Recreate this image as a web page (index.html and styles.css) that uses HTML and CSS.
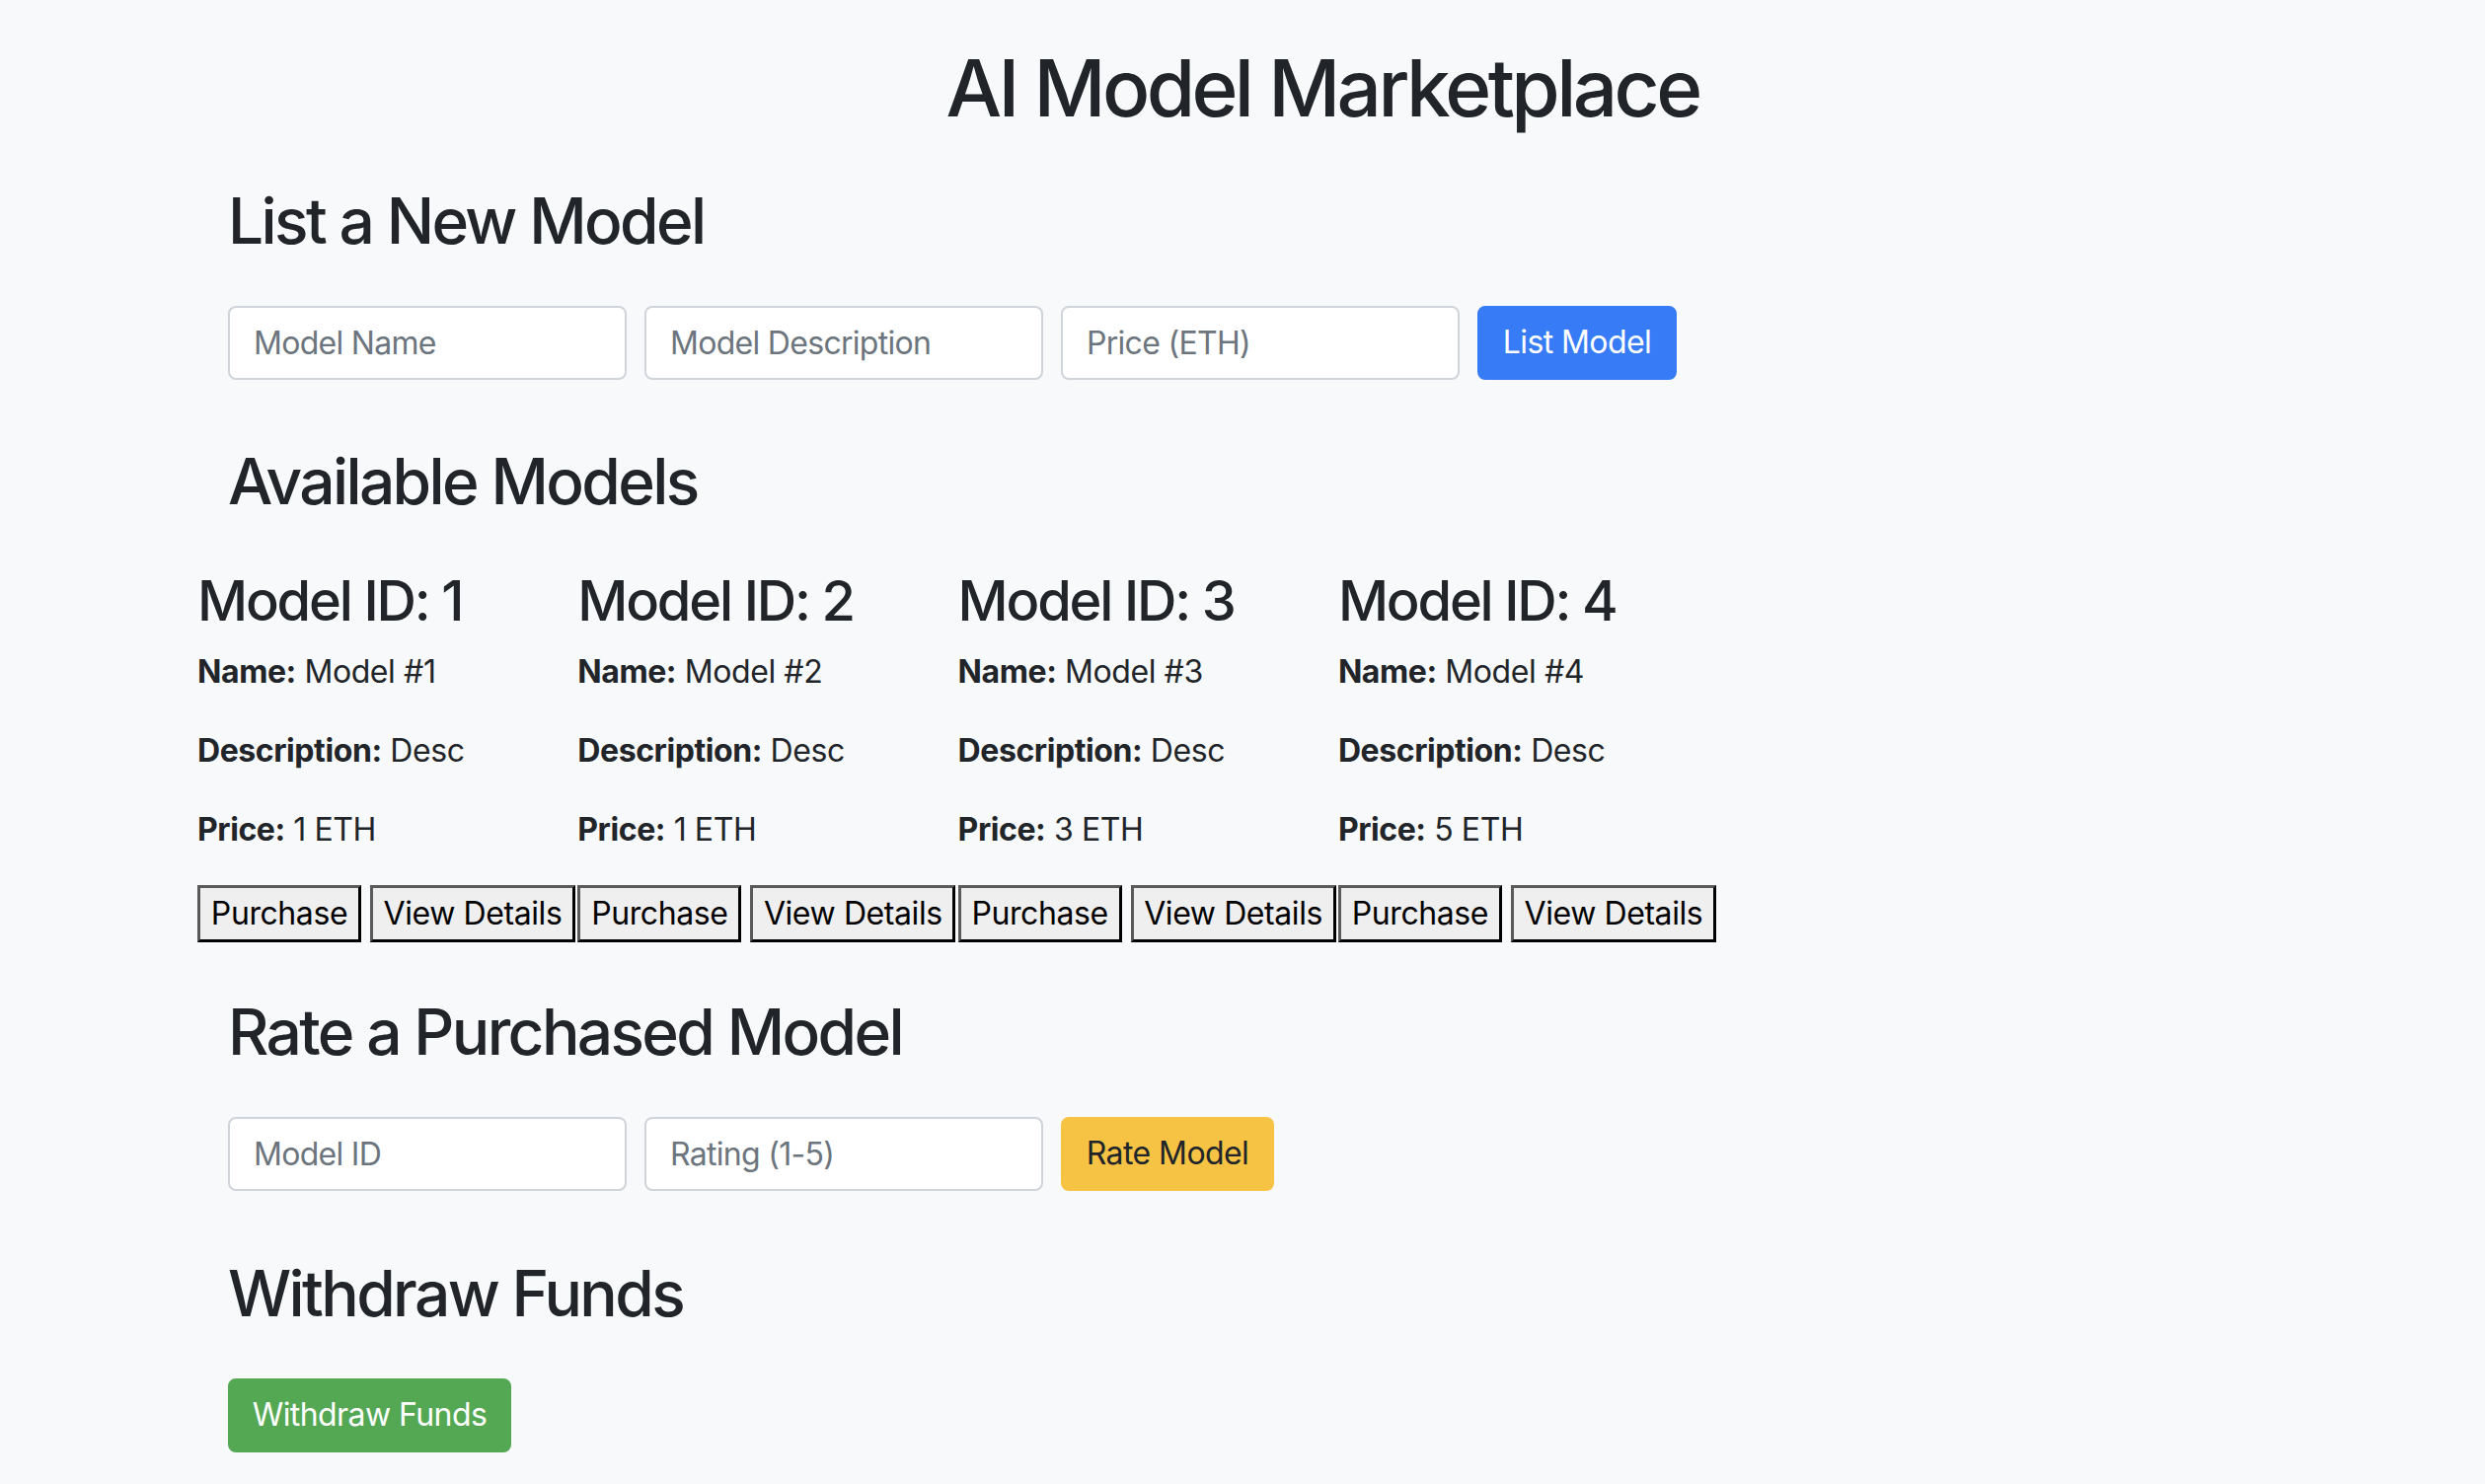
FILE: index.html
```html
<!DOCTYPE html>
<html lang="en">
<head>
<meta charset="utf-8">
<title>AI Model Marketplace</title>
<link rel="stylesheet" href="styles.css">
</head>
<body>
<main class="page">
  <h1 class="title">AI Model Marketplace</h1>

  <section class="section section-list">
    <h2 class="section-title">List a New Model</h2>
    <div class="form-row">
      <input class="field" type="text" placeholder="Model Name">
      <input class="field" type="text" placeholder="Model Description">
      <input class="field" type="text" placeholder="Price (ETH)">
      <button class="btn btn-primary btn-list" type="button">List Model</button>
    </div>
  </section>

  <section class="section section-models">
    <h2 class="section-title title-models">Available Models</h2>
  </section>

  <div class="model-grid">
    <div class="model-card">
      <h3 class="model-id">Model ID: 1</h3>
      <p class="model-line"><strong>Name:</strong> Model #1</p>
      <p class="model-line"><strong>Description:</strong> Desc</p>
      <p class="model-line"><strong>Price:</strong> 1 ETH</p>
      <div class="model-actions">
        <button class="plain-btn btn-buy" type="button">Purchase</button>
        <button class="plain-btn btn-view" type="button">View Details</button>
      </div>
    </div>
    <div class="model-card">
      <h3 class="model-id">Model ID: 2</h3>
      <p class="model-line"><strong>Name:</strong> Model #2</p>
      <p class="model-line"><strong>Description:</strong> Desc</p>
      <p class="model-line"><strong>Price:</strong> 1 ETH</p>
      <div class="model-actions">
        <button class="plain-btn btn-buy" type="button">Purchase</button>
        <button class="plain-btn btn-view" type="button">View Details</button>
      </div>
    </div>
    <div class="model-card">
      <h3 class="model-id">Model ID: 3</h3>
      <p class="model-line"><strong>Name:</strong> Model #3</p>
      <p class="model-line"><strong>Description:</strong> Desc</p>
      <p class="model-line"><strong>Price:</strong> 3 ETH</p>
      <div class="model-actions">
        <button class="plain-btn btn-buy" type="button">Purchase</button>
        <button class="plain-btn btn-view" type="button">View Details</button>
      </div>
    </div>
    <div class="model-card">
      <h3 class="model-id">Model ID: 4</h3>
      <p class="model-line"><strong>Name:</strong> Model #4</p>
      <p class="model-line"><strong>Description:</strong> Desc</p>
      <p class="model-line"><strong>Price:</strong> 5 ETH</p>
      <div class="model-actions">
        <button class="plain-btn btn-buy" type="button">Purchase</button>
        <button class="plain-btn btn-view" type="button">View Details</button>
      </div>
    </div>
  </div>

  <section class="section section-rate">
    <h2 class="section-title">Rate a Purchased Model</h2>
    <div class="form-row">
      <input class="field" type="text" placeholder="Model ID">
      <input class="field" type="text" placeholder="Rating (1-5)">
      <button class="btn btn-warning btn-rate" type="button">Rate Model</button>
    </div>
  </section>

  <section class="section section-withdraw">
    <h2 class="section-title">Withdraw Funds</h2>
    <div class="form-row">
      <button class="btn btn-success btn-withdraw" type="button">Withdraw Funds</button>
    </div>
  </section>
</main>
</body>
</html>
```

FILE: styles.css
```css
html, body {
  margin: 0;
  padding: 0;
}

body {
  background: #f8f9fa;
  color: #212529;
  font-family: Inter, "Liberation Sans", "Noto Sans", sans-serif;
  font-size: 32px;
  line-height: 1.5;
  letter-spacing: -0.013em;
}

.page {
  width: 2280px;
  margin-left: 200px;
  padding-top: 41px;
}

.title {
  margin: 0 0 49px;
  font-size: 80px;
  line-height: 96px;
  font-weight: 500;
  letter-spacing: -0.045em;
  text-align: center;
}

.section {
  padding-left: 31px;
}

.section-title {
  margin: 0 0 47px;
  font-size: 64px;
  line-height: 76.8px;
  font-weight: 500;
  letter-spacing: -0.041em;
}

.section-models {
  margin-top: 65px;
}

.title-models {
  margin-bottom: 49px;
}

.section-rate {
  margin-top: 52.7px;
}

.section-withdraw {
  margin-top: 66px;
}

.form-row {
  display: flex;
  align-items: stretch;
  gap: 18px;
}

.field {
  box-sizing: border-box;
  width: 404px;
  height: 75px;
  padding: 12px 24px;
  border: 2px solid #ced4da;
  border-radius: 8px;
  background: #fff;
  color: #495057;
  font-family: inherit;
  font-size: 32px;
  line-height: 48px;
  letter-spacing: -0.022em;
  outline: none;
}

.field::placeholder {
  color: #6c757d;
  opacity: 1;
}

.btn {
  box-sizing: border-box;
  height: 75px;
  padding: 0;
  border: 2px solid transparent;
  border-radius: 8px;
  font-family: inherit;
  font-size: 32px;
  line-height: 48px;
  font-weight: 400;
  letter-spacing: -0.018em;
  text-align: center;
  cursor: pointer;
}

.btn-primary {
  background: #377bf6;
  border-color: #377bf6;
  color: #fff;
}

.btn-warning {
  background: #f6c344;
  border-color: #f6c344;
  color: #212529;
}

.btn-success {
  background: #54a853;
  border-color: #54a853;
  color: #fff;
}

.btn-list {
  width: 202px;
}

.btn-rate {
  width: 216px;
}

.btn-withdraw {
  width: 287px;
}

.model-grid {
  display: grid;
  grid-template-columns: repeat(4, 385.3px);
}

.model-id {
  margin: 0 0 14.5px;
  font-size: 56px;
  line-height: 67.2px;
  font-weight: 500;
  letter-spacing: -0.039em;
}

.model-line {
  margin: 0 0 32px;
  font-size: 32px;
  line-height: 48px;
}

.model-line strong {
  font-weight: 700;
}

.model-actions {
  display: flex;
  gap: 9px;
}

.plain-btn {
  box-sizing: border-box;
  height: 58px;
  padding: 2px 0;
  border-style: solid;
  border-width: 3px;
  border-color: #5a5a5a #000 #000 #5a5a5a;
  border-radius: 0;
  background: #efefef;
  color: #000;
  font-family: inherit;
  font-size: 32px;
  line-height: 48px;
  letter-spacing: -0.013em;
  text-align: center;
  cursor: pointer;
}

.btn-buy {
  width: 166px;
}

.btn-view {
  width: 208px;
}
```
